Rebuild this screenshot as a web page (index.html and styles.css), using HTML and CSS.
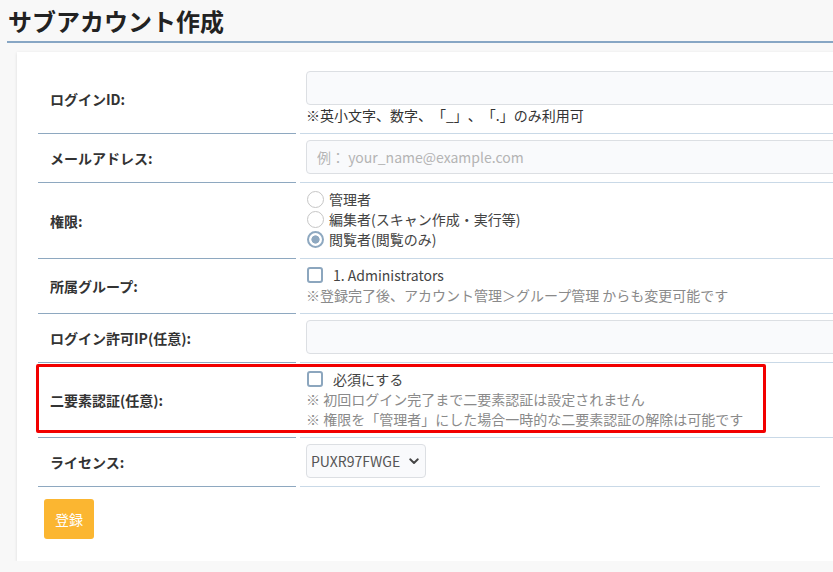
FILE: index.html
```html
<!DOCTYPE html>
<html lang="ja">
<head>
<meta charset="utf-8">
<title>サブアカウント作成</title>
<link rel="stylesheet" href="styles.css">
</head>
<body>
<div class="page">
  <h1 class="title">サブアカウント作成</h1>
  <div class="card">
    <div class="form">
      <div class="row">
        <div class="label">ログインID:</div>
        <div class="value">
          <input class="input" type="text">
          <div class="note dark">※英小文字、数字、「_」、「.」のみ利用可</div>
        </div>
      </div>
      <div class="row">
        <div class="label">メールアドレス:</div>
        <div class="value">
          <input class="input" type="text" placeholder="例： your_name@example.com">
        </div>
      </div>
      <div class="row">
        <div class="label">権限:</div>
        <div class="value radios">
          <label class="radio-line"><input class="radio" type="radio" name="role"><span>管理者</span></label>
          <label class="radio-line"><input class="radio" type="radio" name="role"><span>編集者(スキャン作成・実行等)</span></label>
          <label class="radio-line"><input class="radio" type="radio" name="role" checked><span>閲覧者(閲覧のみ)</span></label>
        </div>
      </div>
      <div class="row">
        <div class="label">所属グループ:</div>
        <div class="value">
          <label class="check-line"><input class="check" type="checkbox"><span>1. Administrators</span></label>
          <div class="note">※登録完了後、アカウント管理＞グループ管理 からも変更可能です</div>
        </div>
      </div>
      <div class="row">
        <div class="label">ログイン許可IP(任意):</div>
        <div class="value">
          <input class="input" type="text">
        </div>
      </div>
      <div class="row highlighted">
        <div class="label">二要素認証(任意):</div>
        <div class="value">
          <label class="check-line"><input class="check" type="checkbox"><span>必須にする</span></label>
          <div class="note">※ 初回ログイン完了まで二要素認証は設定されません</div>
          <div class="note">※ 権限を「管理者」にした場合一時的な二要素認証の解除は可能です</div>
        </div>
        <div class="red-box"></div>
      </div>
      <div class="row">
        <div class="label">ライセンス:</div>
        <div class="value short">
          <div class="select-wrap">
            <select class="select"><option>PUXR97FWGE</option></select>
            <svg class="chevron" width="10" height="7" viewBox="0 0 10 7"><path d="M1.2 1.3 L5 5 L8.8 1.3" fill="none" stroke="#444" stroke-width="1.9" stroke-linecap="round" stroke-linejoin="round"/></svg>
          </div>
        </div>
      </div>
    </div>
    <button class="btn" type="button">登録</button>
  </div>
</div>
</body>
</html>
```
FILE: styles.css
```css
html, body {
  margin: 0;
  padding: 0;
  overflow: hidden;
  background: #f8f8f8;
}
body {
  font-family: "Noto Sans CJK JP", "Noto Sans", sans-serif;
  color: #333;
  font-size: 14px;
  text-spacing-trim: space-all;
}
.page {
  width: 910px;
}
.title {
  margin: 0 0 0 7px;
  padding: 4px 0 3px 1px;
  font-size: 24px;
  line-height: 34px;
  font-weight: bold;
  color: #222;
  border-bottom: 2px solid #87a6c4;
}
.card {
  margin: 9px 0 0 17px;
  background: #fff;
  box-shadow: 0 1px 3px rgba(0, 0, 0, 0.12);
  padding: 13px 0 22px 21px;
}
.form {
  display: flex;
  flex-direction: column;
}
.row {
  position: relative;
  display: grid;
  grid-template-columns: 258px 1fr;
  column-gap: 4px;
}
.label {
  display: flex;
  align-items: center;
  padding-left: 12px;
  font-weight: bold;
  font-size: 14px;
  color: #333;
  border-bottom: 1px solid #8ea8c0;
}
.value {
  padding: 6px 6px 8px 6px;
  border-bottom: 1px solid #c9d9e7;
  display: flex;
  flex-direction: column;
}
.value.radios {
  padding-bottom: 9px;
}
.value.short {
  width: 508px;
}
.input {
  box-sizing: border-box;
  height: 34px;
  width: 100%;
  margin: 0;
  border: 1px solid #dcdfe3;
  border-radius: 4px;
  background: #f9fafc;
  padding: 0 10px;
  font-family: inherit;
  font-size: 14px;
  color: #333;
}
.input::placeholder {
  color: #b4b4b4;
}
.note {
  line-height: 20px;
  color: #8a8a8a;
  font-size: 14px;
}
.note.dark {
  color: #333;
}
.radio-line, .check-line {
  display: flex;
  align-items: center;
  height: 20px;
  color: #444;
  line-height: 20px;
}
.radio {
  appearance: none;
  -webkit-appearance: none;
  box-sizing: border-box;
  flex: 0 0 17px;
  width: 17px;
  height: 17px;
  margin: 0 5px 0 1px;
  border: 1px solid #c6c6c6;
  border-radius: 50%;
  background: #fff;
}
.radio:checked {
  border: 2px solid #8ea8c0;
  background: radial-gradient(circle, #8ea8c0 0 3.8px, #fff 4.4px);
}
.check {
  appearance: none;
  -webkit-appearance: none;
  box-sizing: border-box;
  flex: 0 0 16px;
  width: 16px;
  height: 16px;
  margin: 0 10px 0 1px;
  border: 2px solid #8ca6be;
  border-radius: 3px;
  background: #fff;
}
.red-box {
  position: absolute;
  left: -2px;
  top: 1px;
  width: 730px;
  height: 69px;
  box-sizing: border-box;
  border: 3px solid #f20000;
  border-radius: 2px;
  pointer-events: none;
}
.select-wrap {
  position: relative;
  width: 120px;
  height: 34px;
}
.select {
  appearance: none;
  -webkit-appearance: none;
  box-sizing: border-box;
  width: 120px;
  height: 34px;
  margin: 0;
  padding: 0 0 0 4px;
  border: 1px solid #dcdfe3;
  border-radius: 4px;
  background: #f9fafc;
  font-family: "Noto Sans CJK JP", "Noto Sans", sans-serif;
  font-size: 14px;
  color: #555;
}
.chevron {
  position: absolute;
  right: 7px;
  top: 14px;
}
.btn {
  margin: 12px 0 0 6px;
  width: 50px;
  height: 40px;
  border: none;
  border-radius: 3px;
  background: #fbb631;
  color: #fff;
  font-family: inherit;
  font-size: 14px;
  padding: 0;
}
```
